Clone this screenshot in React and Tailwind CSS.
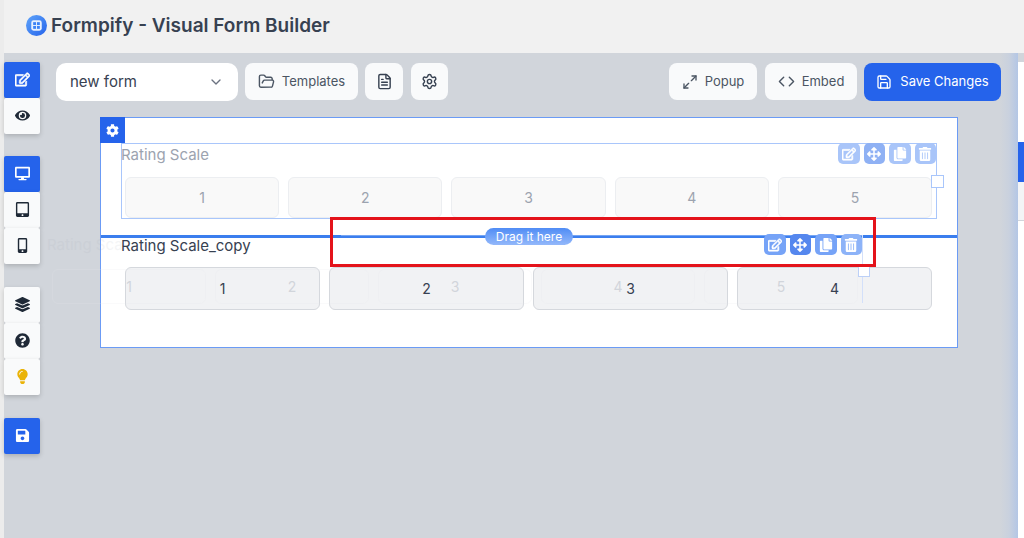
import { ChevronDown, Code, FileText, FolderOpen, Maximize2, Save, Settings } from 'lucide-react';
import {
  FaArrowsAlt, FaCog, FaCopy, FaDesktop, FaEye, FaLayerGroup, FaLightbulb, FaMobileAlt,
  FaQuestionCircle, FaRegEdit, FaSave, FaTabletAlt, FaTrashAlt,
} from 'react-icons/fa';

const EditIcon = ({ className = '' }) => <FaRegEdit className={`[stroke-width:24] ${className}`} />;

const SideButton = ({ icon: Icon, active, className = '', iconClass = 'text-[#1f2937]' }) => (
  <div className={`flex h-[35.5px] w-[36px] items-center justify-center rounded-[2px] shadow-[0_2px_5px_rgba(0,0,0,0.18)] ${active ? 'bg-[#2563eb]' : 'bg-[#f9fafb]'} ${className}`}>
    <Icon className={`text-[15px] ${active ? 'text-white' : iconClass}`} />
  </div>
);

const ToolButton = ({ children, className = '' }) => (
  <div className={`flex h-[37px] shrink-0 items-center justify-center rounded-[8px] bg-[#f9fafb] text-[13px] text-[#4b5563] ${className}`}>
    {children}
  </div>
);

const Tile = ({ value, className = '' }) => (
  <div className={`flex items-center justify-center rounded-[6px] border ${className}`}>{value}</div>
);

const Actions = ({ tints, className = '' }) => (
  <div className={`absolute flex gap-[4px] ${className}`}>
    {[EditIcon, FaArrowsAlt, FaCopy, FaTrashAlt].map((Icon, i) => (
      <div key={i} className={`flex h-[21px] w-[21.5px] items-center justify-center rounded-[5px] text-[14px] text-white ${tints[i]}`}>
        <Icon />
      </div>
    ))}
  </div>
);

const Logo = () => (
  <svg width="21" height="21" viewBox="0 0 22 22" className="-mt-[1px] ml-[1px] shrink-0">
    <defs>
      <linearGradient id="logo" x1="0" y1="0" x2="1" y2="1">
        <stop offset="0" stopColor="#60a5fa" />
        <stop offset="1" stopColor="#2563eb" />
      </linearGradient>
    </defs>
    <circle cx="11" cy="11" r="11" fill="url(#logo)" />
    <rect x="5.5" y="5.5" width="11" height="11" rx="2.5" fill="#e8f0fe" />
    <rect x="7.5" y="7.5" width="3" height="3" fill="#3b82f6" />
    <rect x="11.5" y="7.5" width="3" height="3" fill="#3b82f6" />
    <rect x="7.5" y="11.5" width="3" height="3" fill="#3b82f6" />
    <rect x="11.5" y="11.5" width="3" height="3" fill="#3b82f6" />
  </svg>
);

export default function App() {
  return (
    <div className="flex h-[538px] w-[1024px] overflow-hidden bg-[#f0f0f0] font-['Inter',sans-serif]">
      <div className="w-[4px] shrink-0 bg-[#ececec]" />
      <div className="flex min-w-0 flex-1 flex-col">
        {/* Header */}
        <header className="flex h-[53px] shrink-0 items-center gap-[4px] bg-[#f1f1f1] pb-[1px] pl-[21px]">
          <Logo />
          <h1 className="text-[19px] font-semibold text-[#374151]">Formpify - Visual Form Builder</h1>
        </header>

        <div className="flex min-h-0 flex-1 bg-[#d1d5db]">
          {/* Left rail */}
          <aside className="flex w-[36px] shrink-0 flex-col gap-[0.5px] pt-[9px]">
            <SideButton icon={EditIcon} active />
            <SideButton icon={FaEye} />
            <SideButton icon={FaDesktop} active className="mt-[22px]" />
            <SideButton icon={FaTabletAlt} />
            <SideButton icon={FaMobileAlt} />
            <SideButton icon={FaLayerGroup} className="mt-[23px]" />
            <SideButton icon={FaQuestionCircle} />
            <SideButton icon={FaLightbulb} iconClass="text-[#eab308]" />
            <SideButton icon={FaSave} active className="mt-[23px]" />
          </aside>

          <main className="min-w-0 flex-1 pl-[16px] pt-[9px]">
            {/* Toolbar */}
            <div className="relative z-10 flex h-[39px] items-center">
              <div className="flex h-[38px] w-[182px] shrink-0 items-center justify-between rounded-[10px] bg-white pl-[14px] pr-[14px] pt-[1px] text-[15px] text-[#374151]">
                new form
                <ChevronDown size={16} className="text-[#6b7280]" />
              </div>
              <ToolButton className="ml-[7px] w-[113px] gap-[7px]"><FolderOpen size={17} />Templates</ToolButton>
              <ToolButton className="ml-[7px] w-[38px]"><FileText size={17} className="text-[#374151]" /></ToolButton>
              <ToolButton className="ml-[8px] w-[37px]"><Settings size={17} className="text-[#374151]" /></ToolButton>
              <ToolButton className="ml-[221px] w-[88px] gap-[7px]"><Maximize2 size={16} />Popup</ToolButton>
              <ToolButton className="ml-[8px] w-[92px] gap-[7px]"><Code size={17} />Embed</ToolButton>
              <div className="ml-[7px] flex h-[38px] w-[137px] shrink-0 items-center justify-center gap-[8px] rounded-[8px] bg-[#2563eb] text-[13px] text-white">
                <Save size={16} />Save Changes
              </div>
            </div>

            {/* Canvas */}
            <div className="relative ml-[44px] mt-[16px] h-[231px] w-[858px] border border-[#6b9bf5] bg-white">
              <div className="absolute -left-px -top-px flex h-[26px] w-[25px] items-center justify-center bg-[#2563eb] text-[13px] text-white">
                <FaCog />
              </div>

              {/* Dragged row, washed out */}
              <div className="ml-[20px] mt-[25px] flex h-[76px] w-[816px] flex-col justify-between border border-[#a9c6fb] pl-[3px] pr-[4px]">
                <div className="-ml-[4px] pt-[2px] text-[15px] leading-[18px] text-[#9ca3af]">Rating Scale</div>
                <div className="grid h-[41px] grid-cols-5 gap-[9px] text-[14px] text-[#9ca3af]">
                  {[1, 2, 3, 4, 5].map((n) => (
                    <Tile key={n} value={n} className="border-[#eceef1] bg-[#f9f9f9]" />
                  ))}
                </div>
              </div>

              <div className="mt-[16px] h-[3px] bg-[#3b7eee]" />

              {/* Target row */}
              <div className="ml-[20px] w-[816px] pl-[4px] pr-[5px]">
                <div className="-ml-[4px] mt-[-1px] text-[15px] leading-[18px] text-[#374151]">Rating Scale_copy</div>
                <div className="mt-[12px] grid h-[43px] grid-cols-4 gap-[9px] text-[14px] text-[#374151]">
                  {[1, 2, 3, 4].map((n) => (
                    <Tile key={n} value={n} className="border-[#d5d8dd] bg-[#f1f2f4]" />
                  ))}
                </div>
              </div>

              {/* Drag ghost */}
              <div className="absolute left-[-52px] top-[116px] flex h-[70px] w-[809px] flex-col justify-between text-[#d1d5db]">
                <div className="-ml-[2px] mt-[2px] whitespace-nowrap text-[15px] leading-[18px] text-[#9ca3af] opacity-10">Rating Sca</div>
                <div className="grid h-[35px] grid-cols-5 gap-[9px] pl-[3px] text-[14px]">
                  {[1, 2, 3, 4, 5].map((n) => (
                    <Tile key={n} value={n} className="border-[#e5e7eb]/20 bg-transparent" />
                  ))}
                </div>
              </div>
              <div className="absolute left-[240px] top-[115px] h-[3px] w-[522px] bg-white/30" />
              <div className="absolute left-[761px] top-[117px] h-[68px] w-px bg-[#d3e0fa]" />
              <div className="absolute left-[757px] top-[147px] h-[12px] w-[12px] border border-[#bcd0f7] bg-white" />
              <div className="absolute left-[830px] top-[57px] h-[13px] w-[13px] border border-[#a9c6fb] bg-white" />

              <Actions
                className="left-[737px] top-[25px]"
                tints={['bg-[#a9c5f9]', 'bg-[#8fb1f4]', 'bg-[#a9c5f9]', 'bg-[#a9c5f9]']}
              />
              <Actions
                className="left-[663px] top-[116px]"
                tints={['bg-[#76a3f7]', 'bg-[#5587ee]', 'bg-[#76a3f7]', 'bg-[#8db3f8]']}
              />

              <div className="absolute left-[384px] top-[110px] flex h-[17px] w-[88px] items-center justify-center rounded-full bg-gradient-to-b from-[#4f8cf5] to-[#93b8fa] text-[12px] text-white">
                Drag it here
              </div>
              <div className="absolute left-[229px] top-[99px] h-[50px] w-[546px] border-[3px] border-[#e4131b]" />
            </div>
          </main>

          <div className="w-[18px] shrink-0 bg-gradient-to-r from-[#d1d5db] via-[#c9d1de] to-[#b3c6e5]" />
          <div className="mt-[9px] w-[6px] shrink-0 bg-white">
            <div className="h-[80px]" />
            <div className="h-[40px] bg-[#2563eb]" />
            <div className="h-[38px] bg-[#f3f4f6]" />
            <div className="h-px bg-[#d1d5db]" />
          </div>
        </div>
      </div>
    </div>
  );
}
